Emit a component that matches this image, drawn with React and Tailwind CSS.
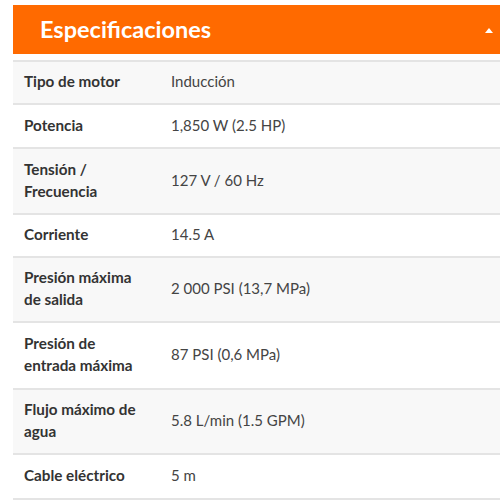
export default function App() {
  const rows = [
    ["Tipo de motor", "Inducción", "h-[43px]"],
    ["Potencia", "1,850 W (2.5 HP)", "h-[44px]"],
    ["Tensión / Frecuencia", "127 V / 60 Hz", "h-[66px]"],
    ["Corriente", "14.5 A", "h-[43px]"],
    ["Presión máxima de salida", "2 000 PSI (13,7 MPa)", "h-[65px]"],
    ["Presión de entrada máxima", "87 PSI (0,6 MPa)", "h-[67px]"],
    ["Flujo máximo de agua", "5.8 L/min (1.5 GPM)", "h-[65px]"],
    ["Cable eléctrico", "5 m", "h-[45px]"],
  ];
  return (
    <div className="w-[500px] h-[500px] overflow-hidden bg-white font-['Lato',sans-serif] pt-[5px] pl-[13px]">
      <div className="w-[500px]">
        <div className="h-[49px] bg-[#ff6a00] flex items-center justify-between pl-[27px] pr-[20px]">
          <span className="text-white text-[23.5px] font-bold leading-none mt-[1px]">Especificaciones</span>
          <svg width="8" height="5" viewBox="0 0 8 5" className="block mt-[2px]">
            <polygon points="0,5 8,5 4,0" fill="white" />
          </svg>
        </div>
        <div className="h-[6px]" />
        <div className="border-t-2 border-[#e4e4e4]">
          {rows.map(([label, value, h], i) => (
            <div
              key={label}
              className={`${h} flex items-center pb-[3px] border-b-2 border-[#e4e4e4] ${i % 2 === 0 ? "bg-[#f8f8f8]" : "bg-white"}`}
            >
              <div className="w-[158px] pl-[11px] pr-[27px] text-[15.25px] leading-[22px] font-bold text-[#333]">
                {label}
              </div>
              <div className="text-[15px] leading-[22px] text-[#444]">{value}</div>
            </div>
          ))}
        </div>
      </div>
    </div>
  );
}
